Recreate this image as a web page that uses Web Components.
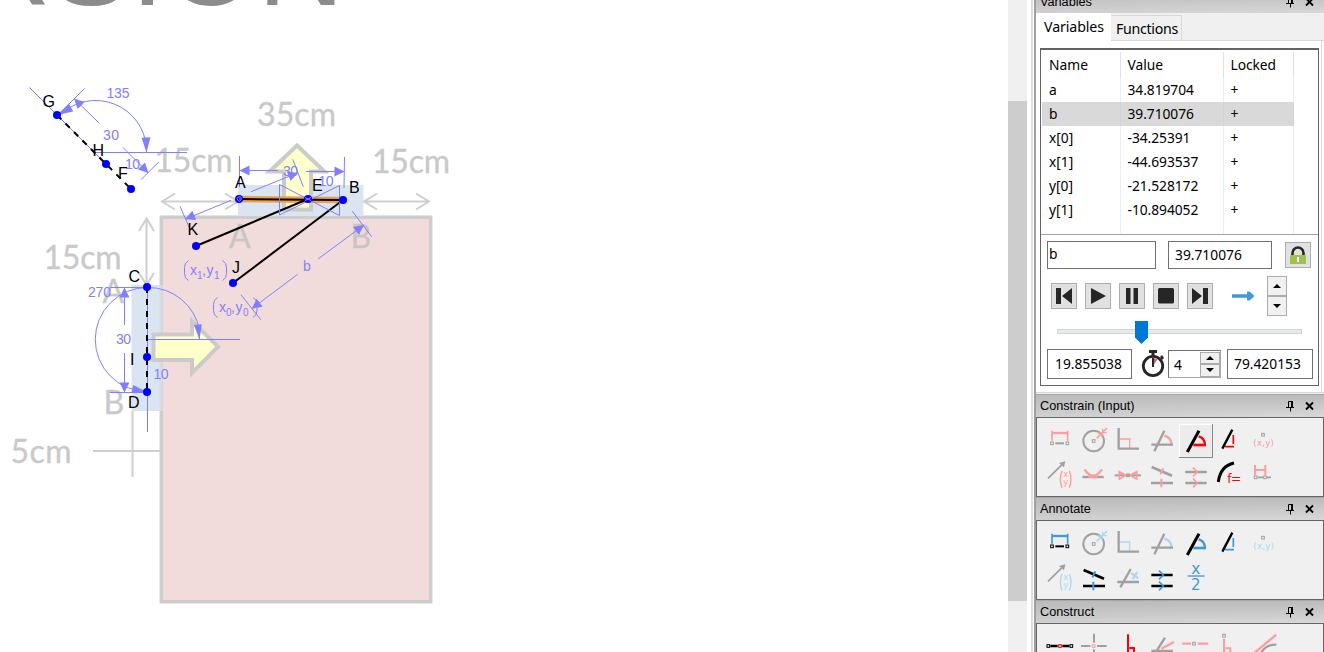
<!DOCTYPE html>
<html lang="en"><head><meta charset="utf-8"><title>Geometry</title>
<style>
html,body{margin:0;height:100%;overflow:hidden;background:#fff}
body{font-family:"Liberation Sans",Arial,sans-serif;color:#000}
</style></head><body>
<geo-app></geo-app>
<script>
const define=(name,html,init)=>customElements.define(name,class extends HTMLElement{
  constructor(){super();this.attachShadow({mode:'open'});}
  connectedCallback(){this.shadowRoot.innerHTML=typeof html==='function'?html(this):html;if(init)init(this,this.shadowRoot);}
});

/* ---------- drawing helpers ---------- */
const L=(a,b,c,d)=>`<path d="M${a} ${b}L${c} ${d}"/>`;
// dimension line from (a,b) to its tip (c,d), ending in a filled head
const dim=(a,b,c,d,len=10,w=5)=>{
  const n=Math.hypot(c-a,d-b),ux=(c-a)/n,uy=(d-b)/n,x=c-ux*len,y=d-uy*len;
  return L(a,b,c,d)+`<path fill="#8080ff" stroke="none" d="M${c} ${d}L${x-uy*w} ${y+ux*w}L${x+uy*w} ${y-ux*w}Z"/>`;
};
const T=(x,y,s,w)=>`<text x="${x}" y="${y}"${w?` textLength="${w}"`:''}>${s}</text>`;
const dot=(x,y)=>`<circle cx="${x}" cy="${y}" r="4"/>`;
const paren=(x1,x2,y)=>`<path d="M${x1+4} ${y}Q${x1} ${y+2} ${x1} ${y+7}V${y+13}Q${x1} ${y+18} ${x1+4} ${y+20}M${x2-4} ${y}Q${x2} ${y+2} ${x2} ${y+7}V${y+13}Q${x2} ${y+18} ${x2-4} ${y+20}"/>`;

define('geo-canvas',`<style>:host{display:block;width:1008px;flex:none;overflow:hidden}svg{display:block}
.wm{font:120px "Liberation Sans",Arial,sans-serif;fill:#8c8c8c}
.bg{font-family:Lato,"Open Sans",sans-serif;font-size:32px;fill:#c9c9c9;stroke:#c9c9c9;stroke-width:.3px}
.lb{font-family:"Liberation Sans",Arial,sans-serif;font-size:16px;fill:#000}
.dm{font-family:"Liberation Sans",Arial,sans-serif;font-size:14px;fill:#8080ff}.sub{font-size:10px}</style>
<svg width="1008" height="652" viewBox="0 0 1008 652">
<text class="wm" x="-35.9" y="5">RSION</text>
<rect x="161.3" y="217.2" width="269.4" height="384.5" fill="#f2dcdb" stroke="#cdcdcd" stroke-width="3.5"/>
<path fill="#dbe5f1" d="M238 185H363.5V215.5H238ZM131.500 285H162.500V411H131.500Z"/>
<path fill="none" stroke="#cfc9cb" stroke-width="3" d="M161 285V411" opacity=".35"/>
<g fill="none" stroke="#cfcfcf" stroke-width="2">
<path d="M162 201.500H238M175 193.500L162 201.500L175 209.500M225 193.500L238 201.500L225 209.500M364 201.500H429M377 193.500L364 201.500L377 209.500M416 193.500L429 201.500L416 209.500"/>
<path d="M146.500 218V285M139 231L146.500 218.500L154 231M139 273L146.500 285L154 273M93 451H160M132.500 411V477"/></g>
<g fill="#ffffcc" stroke="#cbcbc9" stroke-width="4">
<path d="M297 145.500L324.500 171.500H311V209.500H284V171.500H269.500Z"/>
<path d="M153.500 334.500H192V321L218 346.700L192 373V360H153.500Z"/></g>
<g class="bg">${T(257,125.5,'35cm',79)}${T(154.5,172,'15cm',78)}${T(372,173,'15cm',78)}${T(43.5,269,'15cm',78)}${T(10.5,462.5,'5cm',61)}
${T(102.5,302.5,'A')}${T(103.5,413.5,'B')}<g fill="#cac4c4" stroke="#cac4c4">${T(229,248,'A')}${T(350.5,248,'B')}</g></g>
<path d="M239 199L343 200" stroke="#f0a054" stroke-width="6.500" fill="none"/>
<path d="M239 199L343 200M196 246L308 199M233 283L343 200" stroke="#000" stroke-width="2" fill="none"/>
<g stroke="#8080ff" fill="none" stroke-width="1">
${L(29.5,87.5,101,159)}${L(84.7,88.3,61,112)}${dim(99.5,123.5,74,98.5)}${dim(123,147.5,148.5,173)}${L(158.7,162,141,179.7)}${L(93,152.5,187,152.5)}
<path d="M60 115A51 51 0 0 1 146.500 148"/>${dim(146,138,146.5,152.5,15,4.5)}${dim(70,108,57,115,16,4.5)}
${L(239.5,156,239.5,187)}${L(344.5,157,344,188)}${dim(278,170.5,239.5,170.5)}${dim(306,171.5,344.5,171.5)}
${dim(251,191.7,298,172.7)}${L(292.7,159.3,303.3,186.7)}${dim(231,200.3,185,219.3)}${L(180,206.3,189.5,228)}
<path d="M279.500 184.500V215L339.500 185.500V215.500Z"/>
${dim(318,259,364,225)}${dim(297.7,274.3,251.7,308.7)}${L(352.3,211.3,371.7,236.7)}${L(241,294.7,260.7,319.7)}
${dim(124.5,325,124.5,287.5)}${dim(124.5,353,124.5,392.5)}${L(110,287.5,147,287.5)}${L(110,392.5,147,392.5)}
<path d="M147 391.500A52 52 0 0 1 147.500 287.500A52 52 0 0 1 199.500 330"/>${dim(198,326,199.5,339.5,15,4)}${dim(133,389,147,392,15,4)}
${L(147,339.5,240,339.5)}${L(147.5,287,147.5,432)}${paren(184.5,226.5,260.5)}${paren(213.5,257,297.5)}</g>
<g stroke="#000" stroke-width="2" fill="none" stroke-dasharray="6 6"><path d="M147 287V392"/><path d="M57 115L131 189"/></g>
<g class="dm">${T(106.5,98,'135',23)}${T(103,140,'30',16)}${T(125,169,'10',15)}${T(283,176,'30',15)}${T(318.500,186,'10',15)}${T(88,297,'270',23)}${T(116,344,'30',15)}${T(153.5,379,'10',15)}${T(303,271,'b')}
${T(190,275,'x')}${T(206.5,275,'y')}${T(202,275,',')}${T(219,312,'x')}${T(235.5,312,'y')}${T(231,312,',')}
<g class="sub">${T(197,279,'1')}${T(214,279,'1')}${T(226,316,'0')}${T(243,316,'0')}</g></g>
<g fill="#0000ff">${[[57,115],[106,164],[131,189],[239,199],[308,199],[343,200],[196,246],[233,283],[147,287],[147,357],[147,392]].map(p=>dot(...p)).join('')}</g>
<path d="M241.500 198a2.200 2.200 0 1 0 -.5 2.500M239 199H242M305 197.500L311 200.500M305 200.500L311 197.500" stroke="#9090ff" fill="none"/>
<g class="lb">${T(42.5,106.5,'G')}${T(92.5,155.5,'H')}${T(118,179,'F')}${T(235,188,'A')}${T(312,191,'E')}${T(349,193,'B')}${T(187.5,235,'K')}${T(232,273,'J')}${T(128.5,281.5,'C')}${T(130,364.5,'I')}${T(128,408,'D')}</g>
</svg>`);

define('geo-scroll',`<style>:host{display:flex;flex-direction:column;width:19px;flex:none;background:#f0f0f0;padding-top:101px;box-sizing:border-box}
div{height:500px;background:#cdcdcd}</style><div></div>`);

/* ---------- docked panel ---------- */
define('dock-panel',h=>`<style>:host{flex:none;box-sizing:border-box;height:103px;padding-bottom:1px;background:#a8a8a8;display:flex;flex-direction:column}
header{height:22px;flex:none;display:flex;align-items:center;padding:0 9px 0 4px;box-sizing:border-box;background:linear-gradient(90deg,rgba(185,185,185,.25),transparent),linear-gradient(#bbb,#d8d8d8);font-size:12.700px;white-space:nowrap}
span{flex:1}svg{flex:none}
section{flex:1;min-height:0;display:flex;flex-direction:column}
:host([tools]) section{border:1px solid #666;background:#f0f0f0;padding:6px}</style>
<header><span>${h.getAttribute('heading')}</span><svg width="29" height="12" viewBox="0 0 29 12" fill="none" stroke="#000"><path d="M2.500 7V1.500H6.500M0 7.500H8M4.500 7V11.500"/><path d="M6 1V7" stroke-width="2"/><path d="M20 2.500L27 9.500M27 2.500L20 9.500" stroke-width="1.800"/></svg></header><section><slot></slot></section>`);

/* ---------- toolbar icons: a = figure colour, b = accent colour, 102-unit cells ---------- */
const sq=(x,y,c)=>`<rect x="${x-4}" y="${y-4}" width="8" height="8" fill="none" stroke="${c}" stroke-width="3"/>`;
const P=(d,c,w=6)=>`<path d="${d}" fill="none" stroke="${c}" stroke-width="${w}"/>`;
const tx=(x,y,s,c,z,w)=>`<text x="${x}" y="${y}" fill="${c}" font-size="${z}" text-anchor="middle"${w?` textLength="${w}"`:''}>${s}</text>`;
const ICON={
 dist:(a,b)=>P('M28 27H73',b,7)+P('M27 20V50M74 20V50',b,5)+sq(27,58,a)+sq(73,58,a)+P('M37 58H63',a,6),
 radius:(a,b)=>`<circle cx="50" cy="51" r="31" fill="none" stroke="${a}" stroke-width="6"/>`+sq(50,51,a)+P('M59 43L72 30M78 24L90 12',b,5)+P('M63 27H75V39M77 14V26H89',b,4),
 perp:(a,b)=>P('M25 45H56V72',b,4)+P('M23 12V74H84',a,7),
 angle:(a,b)=>P('M58 35Q77 39 80 60',b,7)+P('M28 82L58 20M19 62H84',a,7),
 angle2:(a,b)=>P('M43 63H81',b,8)+P('M59 37Q77 42 78 62',b,7)+P('M25 84L60 20',a,9),
 tri:(a,b)=>P('M61 33V60M36 68H63',b,5)+P('M28 74L58 17',a,7),
 coord:(a,b)=>sq(48,32,a)+tx(50,66,'(x,y)',b,26,62),
 vec:(a,b)=>P('M15 61L60 17',a,5)+`<path d="M67 10L63 28L48 15Z" fill="${a}"/>`+P('M57 39Q47 64 57 89M79 39Q89 64 79 89',b,4)+tx(68,58,'x',b,25)+tx(68,81,'y',b,25),
 tangent:(a,b)=>P('M16 57H80',a,7)+P('M22 34Q48 72 75 34',b,7)+P('M34 56H63',b,7),
 bow:(a,b)=>P('M11 52H90',a,6)+P('M25 41V63L45 52ZM77 41V63L57 52Z',b,5)+sq(51,52,a),
 slope:(a,b)=>P('M20 27L81 53M18 75H84',a,8)+P('M46 49L55 31M49 62V88',b,6),
 par:(a,b)=>P('M19 42H83M19 75H83',a,7)+P('M42 29L55 42L42 55M42 62L55 75L42 88',b,5),
 func:(a,b)=>P('M16 72Q22 24 63 15',a,9)+tx(64,76,'f=',b,37,42),
 seg:(a,b)=>P('M24 21V52M55 21V52M24 36H55',b,6)+sq(26,58,a)+sq(54,58,a)+P('M32 58H48M60 58H72',a,5),
 anglex:(a,b)=>P('M28 79L59 24M19 63H84',a,7)+P('M60 36L82 52M65 54L79 33',b,7),
 half:(a,b)=>tx(50,38,'x',b,46)+P('M26 45H77',b,4)+tx(50,87,'2',b,45),
 mid:(a,b)=>P('M22 48H44M58 48H79',a,7)+sq(16,48,a)+sq(51,48,b)+sq(85,48,a),
 inter:(a,b)=>P('M12 48H40M60 48H89M51 11V38M51 58V90',a,6)+sq(50,48,b),
 perpl:(a,b)=>P('M51 13V90M55 54H69V80',b,6),
 bis:(a,b)=>P('M49 56L87 36',b,7)+P('M30 70L60 23M19 63H84',a,7),
 pline:(a,b)=>P('M10 41H36M56 41H88',b,7)+sq(45,41,a),
 pperp:(a,b)=>P('M33 26V90M37 55H52V80',b,6)+sq(33,17,a),
 tan:(a,b)=>P('M38 78Q52 42 88 44',a,7)+P('M23 68L88 14',b,7)
};
define('tool-icon',h=>{
  const [a,b]={r:['#a0a0a0','#ff9c9c'],R:['#000','#f00'],d:['#a0a0a0','#acd8f2'],D:['#000','#3c9ad8']}[h.getAttribute('tone')];
  return `<style>:host{display:block;width:34px;height:34px;box-sizing:border-box}
  svg{display:block;font-family:"DejaVu Sans",sans-serif}
  :host([pressed]){box-shadow:inset -1px -1px #888,inset 1px 1px #fff;background:#ececec}</style>
  <svg width="34" height="34" viewBox="0 0 102 102">${ICON[h.getAttribute('name')](a,b)}</svg>`;
});
define('tool-grid',h=>`<style>:host{display:grid;grid-template-columns:repeat(7,34px);grid-auto-rows:34px}</style>`+
  h.getAttribute('tools').split(' ').map(s=>{const [n,t,p]=s.split(':');return `<tool-icon name="${n}" tone="${t}"${p?' pressed':''}></tool-icon>`;}).join(''));

/* ---------- variables panel ---------- */
define('tab-bar',`<style>:host{display:flex;height:28px;flex:none;background:#f0f0f0;font:14.200px "Noto Sans",sans-serif}
div{box-sizing:border-box;white-space:nowrap}
.on{width:75px;background:#fff;padding:4px 0 0 8px;letter-spacing:-.1px}
.off{width:71px;margin-top:2px;border:1px solid #d9d9d9;border-left:0;padding:3px 0 0 5px;line-height:19px;letter-spacing:-.3px}
.rest{flex:1;border-bottom:1px solid #d9d9d9}</style><div class="on">Variables</div><div class="off">Functions</div><div class="rest"></div>`);
define('var-table',`<style>:host{display:grid;grid-template-columns:79px 103px 70px 1fr;grid-template-rows:26px repeat(6,24px) 1fr;height:185px;box-sizing:border-box;padding:2px 0 0 1px;border-bottom:1px solid #a0a0a8;font:13.800px/24px "Noto Sans",sans-serif}
div{padding-left:6.500px;border-right:1px solid #e6f0fa;white-space:nowrap;box-sizing:border-box}
.n{padding-left:7px}.h{border-color:#e2e2e2;line-height:26px;height:26px}.s{background:#d9d9d9;border-color:#d0d4d8}.e{border:0;background:none}.v{letter-spacing:-.05px}</style>`+
 [['Name','Value','Locked'],['a','34.819704','+'],['b','39.710076','+'],['x[0]','-34.25391','+'],['x[1]','-44.693537','+'],['y[0]','-21.528172','+'],['y[1]','-10.894052','+'],['','','']]
 .map((r,i)=>r.map((c,j)=>`<div class="${i?'':'h '}${i==2?'s ':''}${j?'v':'n'}">${c}</div>`).join('')+'<div class="e"></div>').join(''));
define('text-box',`<style>:host{display:flex;box-sizing:border-box;border:1px solid #707070;background:#fff;align-items:center;font:13.800px "Noto Sans",sans-serif;flex:none}</style><slot></slot>`);
const MEDIA={
 first:'<path d="M5 5h5v16H5zM21 5v16L11 13z"/>',play:'<path d="M6 5l15 8-15 8z"/>',pause:'<path d="M7 5h4.500v16H7zM14.500 5H19v16h-4.500z"/>',
 stop:'<rect x="5" y="5" width="16" height="15.500" rx="1.500"/>',last:'<path d="M5 5v16l10-8zM16 5h5v16h-5z"/>',
 lock:'<path d="M7.500 13V11a5.500 5.500 0 0 1 11 0v2" fill="none" stroke="#262626" stroke-width="2.600"/><rect x="5" y="13" width="16" height="9" rx="1" fill="#a0c050"/><rect x="12" y="15" width="2" height="5" fill="#fff"/>'};
define('media-button',h=>`<style>:host{display:block;width:26px;height:26px;flex:none;box-sizing:border-box;background:#e1e1e1;border:1px solid #adadad}svg{display:block;margin:-1px;fill:#262626;stroke-linejoin:round}</style><svg width="26" height="26">${MEDIA[h.getAttribute('icon')]}</svg>`);
define('spin-buttons',`<style>:host{display:flex;flex-direction:column;flex:none;box-sizing:border-box}
div{flex:1;border:1px solid #acacac;background:#f0f0f0;display:flex;align-items:center;justify-content:center}</style>
<div><svg width="8" height="4"><path d="M0 4L4 0L8 4Z"/></svg></div><div><svg width="8" height="4"><path d="M0 0L4 4L8 0Z"/></svg></div>`);
define('var-controls',`<style>:host{display:flex;flex-direction:column;padding:6px 5px 0 6px;box-sizing:border-box;flex:1}
.r{display:flex}.r1{height:28px;align-items:center}.r2{margin-top:7px;height:40px;align-items:center;padding-left:4px;gap:8px}
.r3{height:23px;margin-top:5px;padding-left:10px}.r4{height:30px;margin-top:5px;align-items:center}
svg{flex:none;display:block}</style>
<div class="r r1"><text-box style="width:109px;height:28px;padding:0 0 3px 1px">b</text-box><text-box style="width:104px;height:28px;margin-left:12px;padding:0 0 1px 6px">39.710076</text-box><media-button icon="lock" style="margin-left:13px"></media-button></div>
<div class="r r2"><media-button icon="first"></media-button><media-button icon="play"></media-button><media-button icon="pause"></media-button><media-button icon="stop"></media-button><media-button icon="last"></media-button>
<svg style="margin-left:11px" width="23" height="12"><path d="M0 4.300H15V1.500H17.500L22.500 6L17.500 10.500H15V7.700H0Z" fill="#3c9ad8"/></svg><spin-buttons style="width:20px;height:40px;margin-left:4px"></spin-buttons></div>
<div class="r r3"><svg width="246" height="23"><rect x=".5" y="8.500" width="244" height="4" fill="#e7eaea" stroke="#d2d6d6"/><path d="M78 0H91V16.500L84.500 23L78 16.500Z" fill="#0078d7"/></svg></div>
<div class="r r4"><text-box style="width:85px;height:30px;padding-left:7px;padding-bottom:2px">19.855038</text-box>
<svg style="margin-left:8px" width="26" height="30"><circle cx="13" cy="17" r="9.700" fill="#fff" stroke="#262626" stroke-width="2.800"/><path d="M9 1H17V4H14.500V7H11.500V4H9ZM20 8L22 6L24 9L22 11Z" fill="#262626"/><path d="M13 17V9A8 8 0 0 1 17.500 10.500Z" fill="#d96272"/><path d="M13 9V18" stroke="#262626" stroke-width="2"/></svg>
<text-box style="width:53px;height:28px;margin-left:2px;padding:0 0 0 5px;justify-content:space-between;border-color:#707070 #aaa #aaa #707070">4<spin-buttons style="width:20px;height:25px"></spin-buttons></text-box>
<text-box style="width:86px;height:30px;margin-left:6px;padding-left:6px;padding-bottom:2px">79.420153</text-box></div>`);
define('var-panel',`<style>:host{display:flex;flex-direction:column;height:378px;background:#fff}
.body{flex:1;margin:7px 2px 5px 4px;border:1px solid #646464;border-top-width:2px;box-sizing:border-box;display:flex;flex-direction:column;min-height:0}
.w{flex:1;display:flex;flex-direction:column;border-right:1px solid #d9d9d9;margin-right:2px;min-height:0}</style><tab-bar></tab-bar><div class="w"><div class="body"><var-table></var-table><var-controls></var-controls></div></div>`);

define('geo-dock',`<style>:host{display:flex;flex-direction:column;width:297px;height:652px;overflow:hidden;box-sizing:border-box;border-left:4px solid #fff;background:#fff;flex:none}
.in{border-left:2px solid #dedede;flex:1;display:flex;padding-left:1px;min-height:0}
.col{flex:1;border-left:2px solid #a0a0a0;border-right:1px solid #a0a0a0;display:flex;flex-direction:column;min-height:0}
.top{height:404px;margin-top:-9px;padding:0;background:#fff}
.gap{height:3px;flex:none;box-sizing:border-box;border-top:1px solid #d8d8d8;border-bottom:1px solid #a8a8a8;background:#eee;margin-top:-3px}</style>
<div class="in"><div class="col">
<dock-panel class="top" heading="Variables"><var-panel></var-panel></dock-panel><div class="gap"></div>
<dock-panel tools heading="Constrain (Input)"><tool-grid tools="dist:r radius:r perp:r angle:r angle2:R:1 tri:R coord:r vec:r tangent:r bow:r slope:r par:r func:R seg:r"></tool-grid></dock-panel>
<dock-panel tools heading="Annotate"><tool-grid tools="dist:D radius:d perp:d angle:d angle2:D tri:D coord:d vec:d slope:D anglex:d par:D half:D"></tool-grid></dock-panel>
<dock-panel tools heading="Construct"><tool-grid tools="mid:R inter:r perpl:R bis:r pline:r pperp:r tan:r"></tool-grid></dock-panel>
</div></div>`);
define('geo-app',`<style>:host{display:flex;width:1324px;height:652px;overflow:hidden;background:#fff}</style><geo-canvas></geo-canvas><geo-scroll></geo-scroll><geo-dock></geo-dock>`);
</script></body></html>
